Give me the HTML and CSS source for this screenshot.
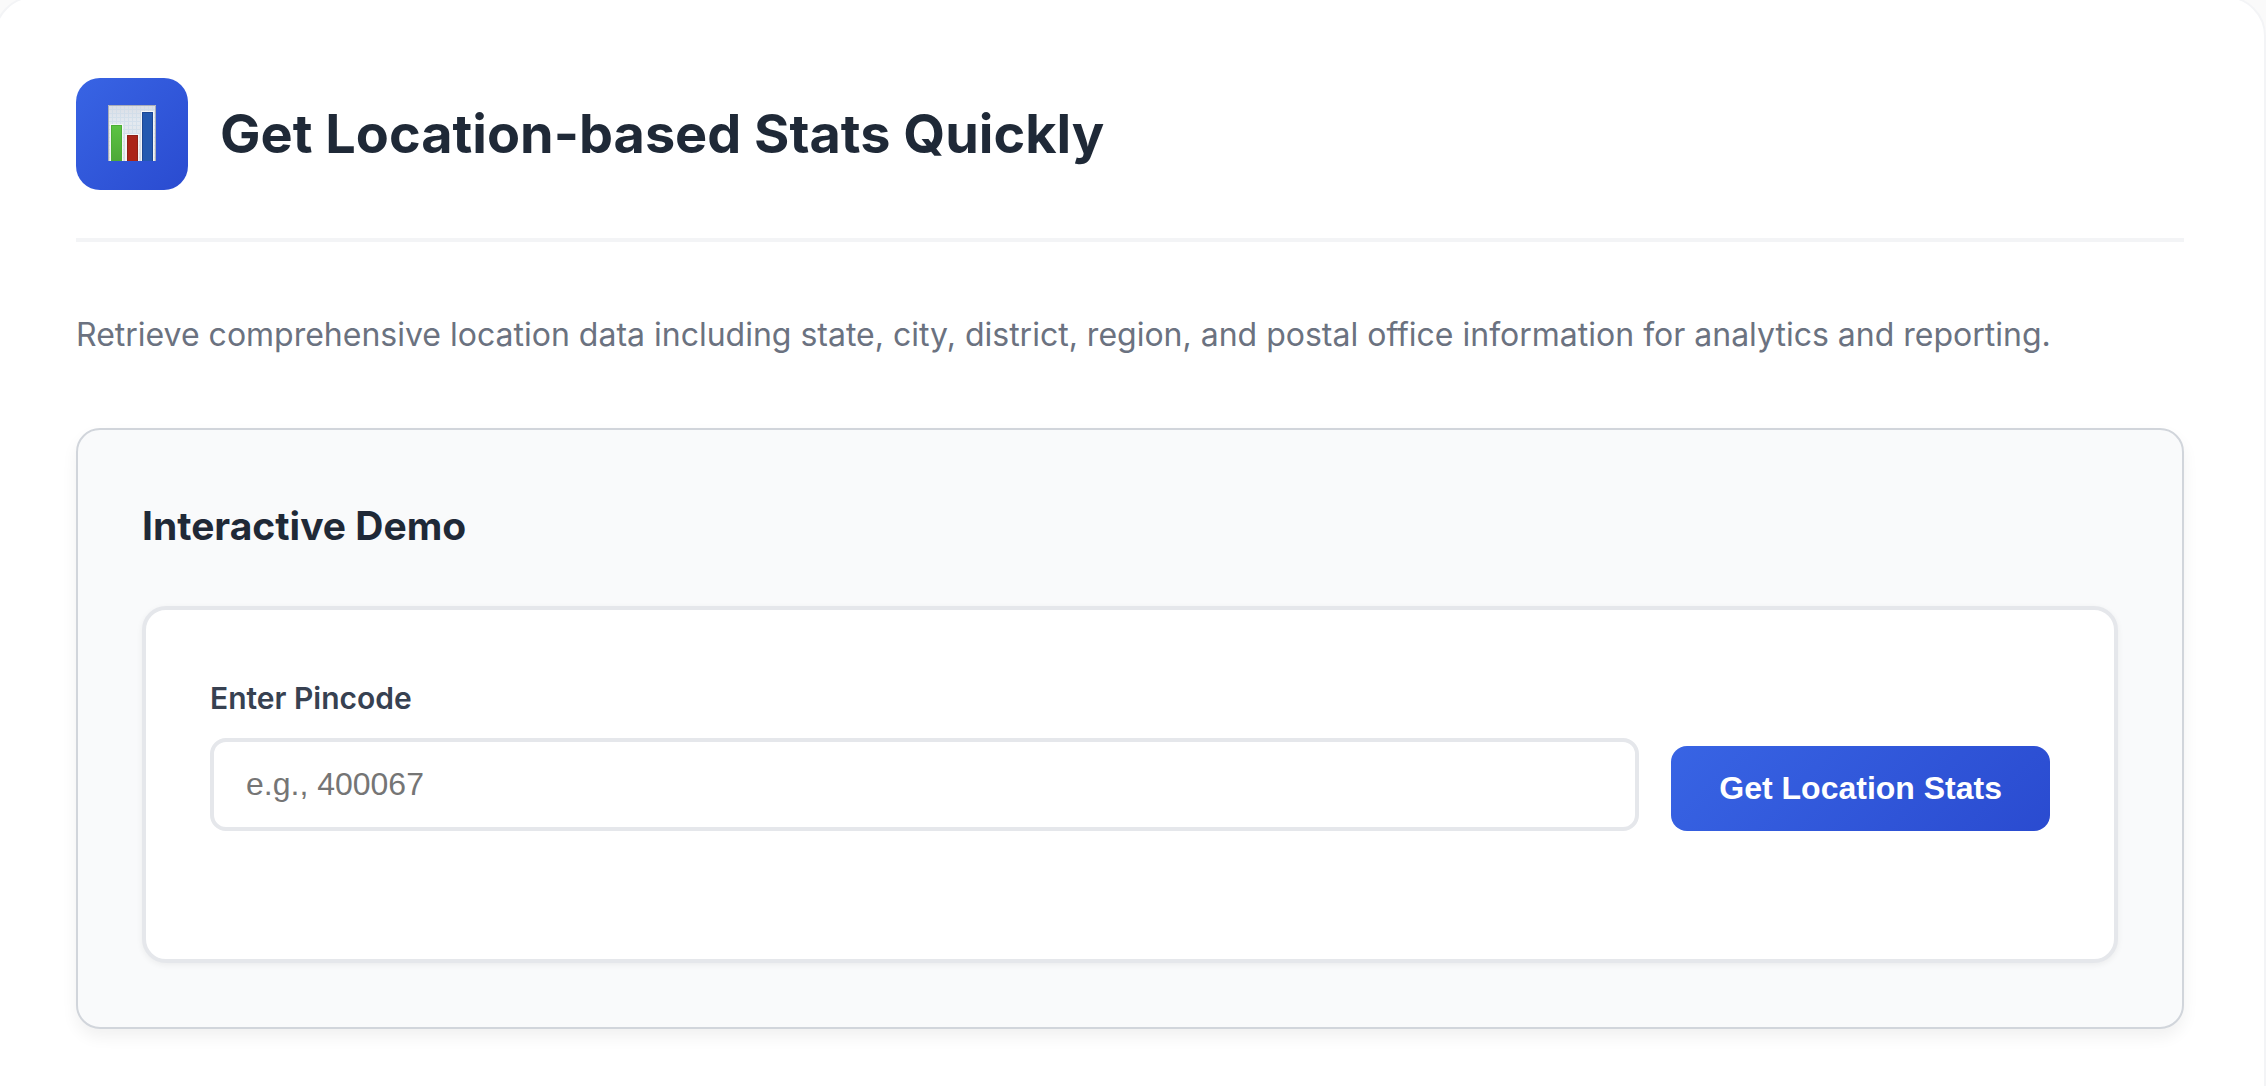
FILE: index.html
```html
<!DOCTYPE html>
<html lang="en">
<head>
    <meta charset="UTF-8">
    <meta name="viewport" content="width=device-width, initial-scale=1.0">
    <title>Location Stats</title>
    <link rel="stylesheet" href="styles.css">
</head>
<body>
    <main class="section">
        <div class="section-header">
            <div class="section-icon">
                <svg width="48" height="56" viewBox="0 0 48 56" aria-hidden="true">
                    <defs>
                        <linearGradient id="paper" x1="0" y1="0" x2="0" y2="1">
                            <stop offset="0" stop-color="#d9dde5"/>
                            <stop offset="0.3" stop-color="#e3e9f0"/>
                            <stop offset="1" stop-color="#e2e2e2"/>
                        </linearGradient>
                        <linearGradient id="green" x1="0" y1="0" x2="0" y2="1">
                            <stop offset="0" stop-color="#5cc443"/>
                            <stop offset="1" stop-color="#4ea838"/>
                        </linearGradient>
                        <pattern id="grid" width="4" height="4" patternUnits="userSpaceOnUse">
                            <path d="M0 .5h4M.5 0v4" stroke="#c6d8e8" stroke-width="1" opacity=".5"/>
                        </pattern>
                    </defs>
                    <rect width="48" height="56" fill="url(#paper)"/>
                    <rect width="48" height="56" fill="url(#grid)"/>
                    <path d="M.5 56V.5h47V56" fill="none" stroke="#a9adb8"/>
                    <path d="M2 56V19h13v37M17 56V29h14v27M33 56V6h13v50" fill="#f4f6f8"/>
                    <rect x="3" y="20" width="11" height="36" fill="url(#green)"/>
                    <rect x="19" y="30" width="11" height="26" fill="#ab2418"/>
                    <rect x="34" y="7" width="11" height="49" fill="#2359b0"/>
                    <path d="M3.500 56V20.500h10V56" fill="none" stroke="#4bae35"/>
                    <path d="M19.500 56V30.500h10V56" fill="none" stroke="#8f2016"/>
                    <path d="M34.500 56V7.500h10V56" fill="none" stroke="#1c4792"/>
                </svg>
            </div>
            <h2>Get Location-based Stats Quickly</h2>
        </div>
        <p class="description">Retrieve comprehensive location data including state, city, district, region, and postal office information for analytics and reporting.</p>

        <div class="demo">
            <h3>Interactive Demo</h3>
            <form class="demo-form">
                <div class="form-group">
                    <label for="pincode">Enter Pincode</label>
                    <input type="text" id="pincode" placeholder="e.g., 400067">
                </div>
                <button type="button">Get Location Stats</button>
            </form>
        </div>
    </main>
</body>
</html>
```

FILE: styles.css
```css
* {
    box-sizing: border-box;
    margin: 0;
    padding: 0;
}

body {
    font-family: Inter, "Liberation Sans", sans-serif;
    background-color: #fafafa;
    color: #1f2937;
    overflow: hidden;
}

/* the card runs past the top left corner of the window */
.section {
    margin: -4px 0 0 -6px;
    min-height: calc(100vh + 48px);
    padding: 80px;
    background-color: #fff;
    border: 2px solid #f3f4f6;
    border-radius: 40px;
}

.section-header {
    display: flex;
    align-items: center;
    gap: 32px;
    padding-bottom: 48px;
    margin-bottom: 64px;
    border-bottom: 4px solid #f3f4f6;
}

.section-icon {
    display: flex;
    align-items: center;
    justify-content: center;
    width: 112px;
    height: 112px;
    padding-bottom: 2px;
    border-radius: 24px;
    background: linear-gradient(135deg, #3864e4, #2a4bd0);
}

.section-header h2 {
    font-size: 54px;
    line-height: 68px;
    font-weight: 700;
}

.description {
    font-size: 32px;
    line-height: 58px;
    color: #6b7280;
    margin-bottom: 64px;
}

.demo {
    padding: 64px;
    background-color: #f9fafb;
    border: 2px solid #d1d5db;
    border-radius: 24px;
    box-shadow: 0 8px 16px rgba(0, 0, 0, 0.06);
}

.demo h3 {
    font-size: 39px;
    line-height: 64px;
    font-weight: 700;
    margin-bottom: 48px;
}

.demo-form {
    display: flex;
    align-items: flex-end;
    gap: 32px;
    padding: 64px 64px 128px;
    background-color: #fff;
    border: 4px solid #e5e7eb;
    border-radius: 24px;
    box-shadow: 0 2px 6px rgba(0, 0, 0, 0.06);
}

.form-group {
    flex: 1;
}

.form-group label {
    display: block;
    font-size: 30px;
    line-height: 48px;
    font-weight: 600;
    color: #374151;
    margin-bottom: 16px;
}

.form-group input {
    display: block;
    width: 100%;
    padding: 24px 32px;
    font-family: "Liberation Sans", sans-serif;
    font-size: 32px;
    line-height: 37px;
    height: 93px;
    color: #1f2937;
    background-color: #fff;
    border: 4px solid #e5e7eb;
    border-radius: 16px;
}

.form-group input::placeholder {
    color: #757575;
}

.demo-form button {
    padding: 24px 48px;
    font-family: "Liberation Sans", sans-serif;
    font-size: 32px;
    line-height: 37px;
    font-weight: 700;
    color: #fff;
    background: linear-gradient(135deg, #3864e4, #2a4bd0);
    border: none;
    border-radius: 16px;
    cursor: pointer;
}
```
